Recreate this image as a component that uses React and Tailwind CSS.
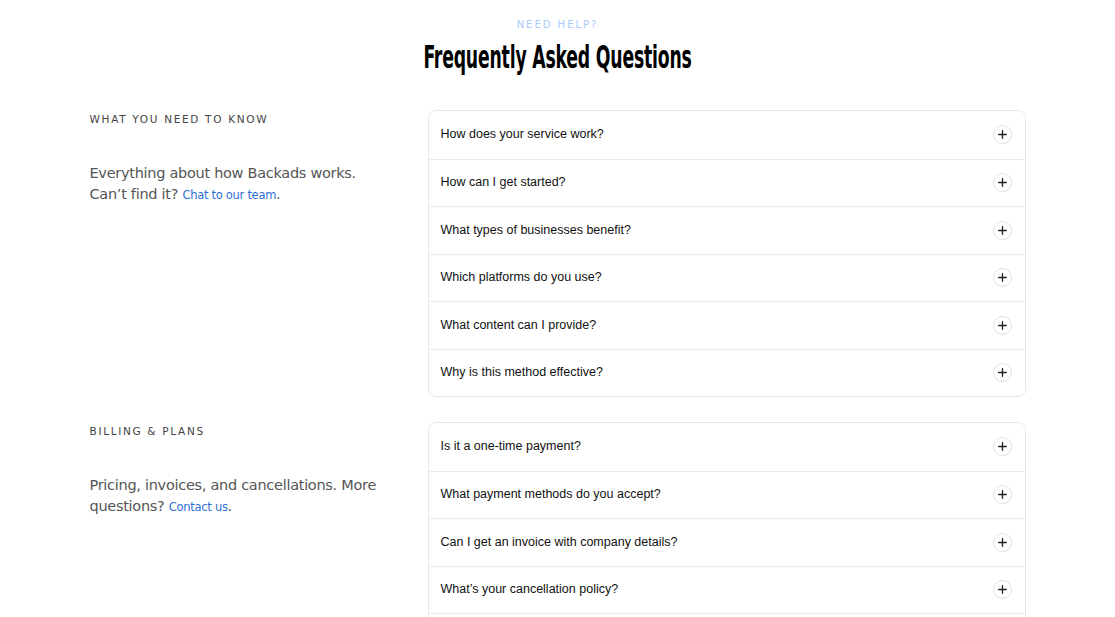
import { Plus } from "lucide-react";

const sections = [
  {
    label: "What you need to know",
    lead: "Everything about how Backads works. Can’t find it?",
    link: "Chat to our team",
    questions: [
      "How does your service work?",
      "How can I get started?",
      "What types of businesses benefit?",
      "Which platforms do you use?",
      "What content can I provide?",
      "Why is this method effective?",
    ],
  },
  {
    label: "Billing & Plans",
    lead: "Pricing, invoices, and cancellations. More questions?",
    link: "Contact us",
    questions: [
      "Is it a one-time payment?",
      "What payment methods do you accept?",
      "Can I get an invoice with company details?",
      "What’s your cancellation policy?",
      "Do you offer refunds?",
    ],
  },
];

export default function App() {
  return (
    <div className="min-h-screen bg-white font-['Liberation_Sans',Arial,sans-serif]">
      <div className="mx-auto w-[936px] pt-[17px]">
        <p className="text-center text-[10px] tracking-[0.2em] text-[#a9cbfb] font-['DejaVu_Sans',sans-serif]">NEED HELP?</p>
        <div className="mt-[5px] flex justify-center">
          <h1 className="h-[40px] text-[32px] leading-[40px] font-bold text-black font-['DejaVu_Sans_Condensed','DejaVu_Sans',sans-serif] tracking-[-0.01em] scale-x-[0.6] whitespace-nowrap">
            Frequently Asked Questions
          </h1>
        </div>
        <div className="mt-[33px] flex flex-col gap-[25px]">
          {sections.map(s => (
            <div key={s.label} className="flex">
              <div className="w-[338px] shrink-0 pt-[2px]">
                <h2 className="text-[10.5px] uppercase tracking-[0.16em] text-[#444] font-['DejaVu_Sans',sans-serif]">{s.label}</h2>
                <p className="mt-[35px] w-[300px] text-[14.5px] leading-[21px] text-[#555] font-['DejaVu_Sans',sans-serif] tracking-[-0.02em]">
                  {s.lead}{" "}
                  <a href="#" className="text-[11.5px] text-[#2f6fd6]">{s.link}</a>.
                </p>
              </div>
              <div className="flex-1 rounded-lg border border-[#e8e8e8] overflow-hidden">
                {s.questions.map((q, i) => (
                  <div key={q} className={`flex h-[47.5px] items-center justify-between pl-[12px] pr-[13px] ${i > 0 ? "border-t border-[#ececec]" : ""}`}>
                    <span className="text-[12.5px] text-[#111]">{q}</span>
                    <span className="flex h-[19px] w-[19px] items-center justify-center rounded-full border border-[#e2e2e2]">
                      <Plus size={13} strokeWidth={2.4} className="text-[#222]" />
                    </span>
                  </div>
                ))}
              </div>
            </div>
          ))}
        </div>
      </div>
    </div>
  );
}
